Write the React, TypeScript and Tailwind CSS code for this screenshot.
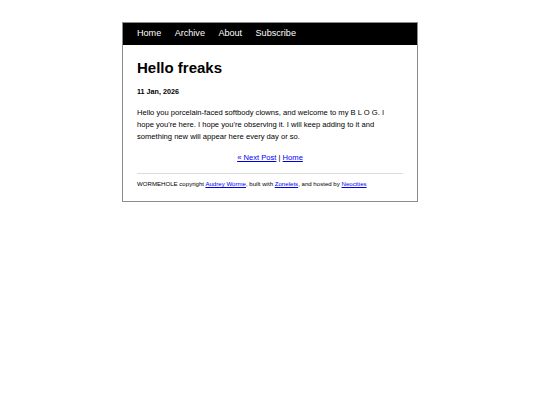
import React from 'react';

const navLinks = ['Home', 'Archive', 'About', 'Subscribe'];

export default function App() {
  return (
    <div className="min-h-screen bg-white pt-[22px] font-['Liberation_Sans',Arial,sans-serif] text-black">
      <div className="mx-auto w-[296px] border border-[#8c8c8c] bg-white">
        {/* top nav */}
        <nav className="flex h-[22px] items-center gap-[13.4px] bg-black px-[14px] text-[9.1px] text-white">
          {navLinks.map(l => (
            <a key={l} href="#" className="text-white no-underline">{l}</a>
          ))}
        </nav>

        <main className="px-[14px] pt-[13.5px] pb-[13px]">
          <h1 className="text-[15px] font-bold leading-[17px]">Hello freaks</h1>
          <p className="mt-[11.5px] text-[7.2px] font-bold leading-[9px]">11 Jan, 2026</p>

          <p className="mt-[11.3px] text-[7.6px] leading-[12px]">
            Hello you porcelain-faced softbody clowns, and welcome to my B L O G. I hope you're here. I hope you're observing it. I will keep adding to it and something new will appear here every day or so.
          </p>

          <p className="mt-[8.3px] text-center text-[7.6px] leading-[12px]">
            <a href="#" className="text-[#0000ee] underline">« Next Post</a> | <a href="#" className="text-[#0000ee] underline">Home</a>
          </p>

          <hr className="mt-[9.5px] border-t border-[#dcdcdc]" />

          <footer className="mt-[6px] text-[6.1px] leading-[8px]">
            WORMEHOLE copyright <a href="#" className="text-[#0000ee] underline">Audrey Worme</a>, built with{' '}
            <a href="#" className="text-[#0000ee] underline">Zonelets</a>, and hosted by{' '}
            <a href="#" className="text-[#0000ee] underline">Neocities</a>
          </footer>
        </main>
      </div>
    </div>
  );
}
